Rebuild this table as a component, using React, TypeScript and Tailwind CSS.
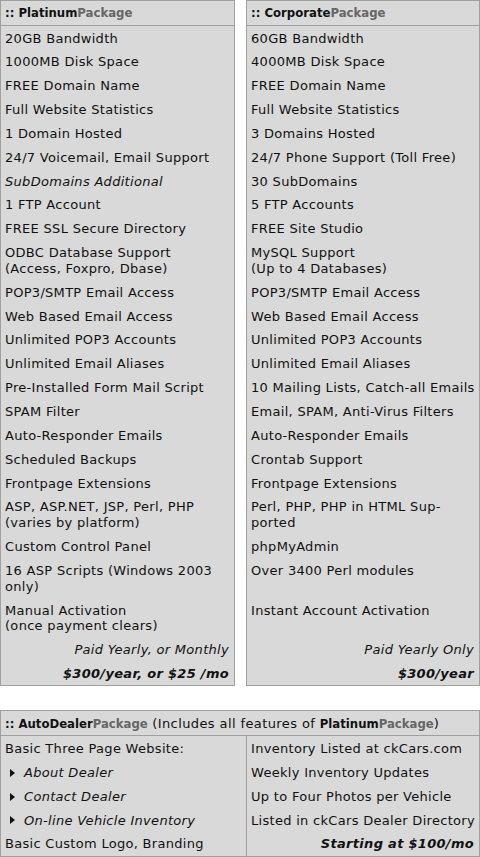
import React from "react";

type Cell = { t: React.ReactNode; s?: "i" | "bi"; r?: boolean };

const c = (t: React.ReactNode, s?: "i" | "bi", r?: boolean): Cell => ({ t, s, r });

const top: [Cell, Cell][] = [
  [c("20GB Bandwidth"), c("60GB Bandwidth")],
  [c("1000MB Disk Space"), c("4000MB Disk Space")],
  [c("FREE Domain Name"), c("FREE Domain Name")],
  [c("Full Website Statistics"), c("Full Website Statistics")],
  [c("1 Domain Hosted"), c("3 Domains Hosted")],
  [c("24/7 Voicemail, Email Support"), c("24/7 Phone Support (Toll Free)")],
  [c("SubDomains Additional", "i"), c("30 SubDomains")],
  [c("1 FTP Account"), c("5 FTP Accounts")],
  [c("FREE SSL Secure Directory"), c("FREE Site Studio")],
  [
    c(<>ODBC Database Support<br />(Access, Foxpro, Dbase)</>),
    c(<>MySQL Support<br />(Up to 4 Databases)</>),
  ],
  [c("POP3/SMTP Email Access"), c("POP3/SMTP Email Access")],
  [c("Web Based Email Access"), c("Web Based Email Access")],
  [c("Unlimited POP3 Accounts"), c("Unlimited POP3 Accounts")],
  [c("Unlimited Email Aliases"), c("Unlimited Email Aliases")],
  [c("Pre-Installed Form Mail Script"), c("10 Mailing Lists, Catch-all Emails")],
  [c("SPAM Filter"), c("Email, SPAM, Anti-Virus Filters")],
  [c("Auto-Responder Emails"), c("Auto-Responder Emails")],
  [c("Scheduled Backups"), c("Crontab Support")],
  [c("Frontpage Extensions"), c("Frontpage Extensions")],
  [
    c(<>ASP, ASP.NET, JSP, Perl, PHP<br />(varies by platform)</>),
    c(<>Perl, PHP, PHP in HTML Sup-<br />ported</>),
  ],
  [c("Custom Control Panel"), c("phpMyAdmin")],
  [c(<>16 ASP Scripts (Windows 2003<br />only)</>), c("Over 3400 Perl modules")],
  [c(<>Manual Activation<br />(once payment clears)</>), c("Instant Account Activation")],
  [c("Paid Yearly, or Monthly", "i", true), c("Paid Yearly Only", "i", true)],
  [c("$300/year, or $25 /mo", "bi", true), c("$300/year", "bi", true)],
];

const body = "font-['DejaVu_Sans',sans-serif] text-[13px] text-[#111] tracking-[0.3px]";
const head = "font-['DejaVu_Sans_Condensed','DejaVu_Sans',sans-serif] text-[13px] text-[#111] tracking-normal";
const BG = "bg-[#d9d9d9]";
const BR = "border-[#a0a0a0]";

function Title({ name, dots = true }: { name: string; dots?: boolean }) {
  return (
    <>
      <span className="font-bold">{dots ? ":: " : ""}{name}</span>
      <span className="font-bold text-[#666]">Package</span>
    </>
  );
}

function TopCell({ cell, last }: { cell: Cell; last: boolean }) {
  const style =
    cell.s === "i" ? "italic" : cell.s === "bi" ? "italic font-bold" : "";
  return (
    <div
      className={`${BG} border-x ${BR} ${last ? "border-b" : ""} pt-[4.5px] pb-[3.5px] leading-[15.85px] ${
        cell.r ? "text-right pr-[5px] pl-[4px]" : "pl-[4px] pr-[1px]"
      } ${style} whitespace-nowrap`}
    >
      {cell.t}
    </div>
  );
}

function Tri() {
  return (
    <svg width="5" height="8" viewBox="0 0 5 8" className="inline-block ml-[9px] mr-[9px] shrink-0">
      <polygon points="0,0 5,4 0,8" fill="#111" />
    </svg>
  );
}

export default function App() {
  return (
    <div className={`w-[480px] bg-white ${body}`}>
      <div className="grid grid-cols-[235px_234px] gap-x-[11px]">
        <div className={`${BG} border ${BR} h-[26px] pl-[4px] flex items-center ${head}`}>
          <Title name="Platinum" />
        </div>
        <div className={`${BG} border ${BR} h-[26px] pl-[4px] flex items-center ${head}`}>
          <Title name="Corporate" />
        </div>
        {top.map((row, i) => (
          <React.Fragment key={i}>
            <TopCell cell={row[0]} last={i === top.length - 1} />
            <TopCell cell={row[1]} last={i === top.length - 1} />
          </React.Fragment>
        ))}
      </div>

      <div className={`mt-[24px] ${BG} border ${BR}`}>
        <div className={`h-[25px] border-b ${BR} pl-[4px] flex items-center whitespace-pre`}>
          <span className={head}>
            <Title name="AutoDealer" />
          </span>
          <span className="font-['DejaVu_Sans',sans-serif] tracking-[0.4px]"> (Includes all features of </span>
          <span className={head}>
            <Title name="Platinum" dots={false} />
          </span>
          <span className="font-['DejaVu_Sans',sans-serif]">)</span>
        </div>
        <div className="grid grid-cols-[245px_1fr] leading-[15.85px]">
          <div className="flex flex-col">
            <div className="pt-[4.5px] pb-[3.5px] pl-[4px]">Basic Three Page Website:</div>
            <div className="pt-[4.5px] pb-[3.5px] italic flex items-center"><Tri />About Dealer</div>
            <div className="pt-[4.5px] pb-[3.5px] italic flex items-center"><Tri />Contact Dealer</div>
            <div className="pt-[4.5px] pb-[3.5px] italic flex items-center"><Tri />On-line Vehicle Inventory</div>
            <div className="pt-[4.5px] pb-[3.5px] pl-[4px]">Basic Custom Logo, Branding</div>
          </div>
          <div className={`flex flex-col border-l ${BR}`}>
            <div className="pt-[4.5px] pb-[3.5px] pl-[4px]">Inventory Listed at ckCars.com</div>
            <div className="pt-[4.5px] pb-[3.5px] pl-[4px]">Weekly Inventory Updates</div>
            <div className="pt-[4.5px] pb-[3.5px] pl-[4px]">Up to Four Photos per Vehicle</div>
            <div className="pt-[4.5px] pb-[3.5px] pl-[4px] whitespace-nowrap">Listed in ckCars Dealer Directory</div>
            <div className="pt-[4.5px] pb-[3.5px] pr-[5px] text-right italic font-bold">Starting at $100/mo</div>
          </div>
        </div>
      </div>
    </div>
  );
}
